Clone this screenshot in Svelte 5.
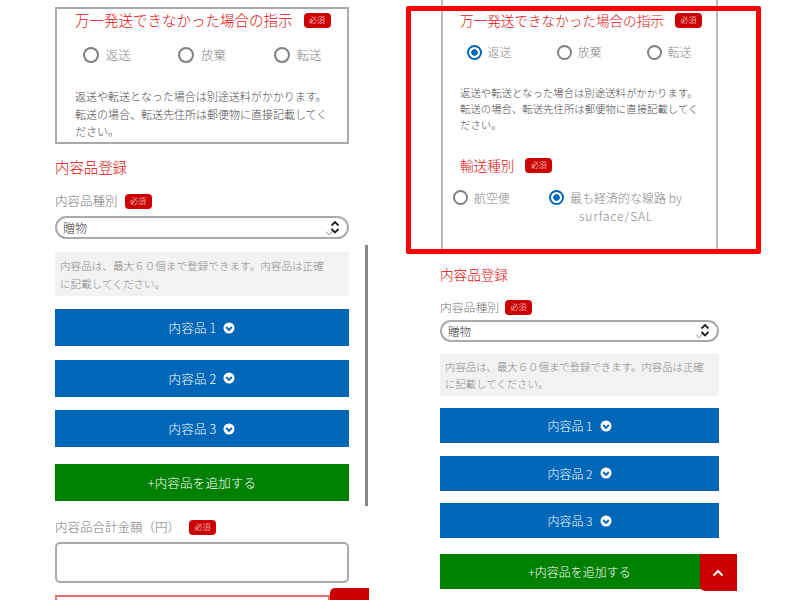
<script>
  const items = ['内容品 1', '内容品 2', '内容品 3'];
  const opts = ['返送', '放棄', '転送'];
</script>

{#snippet badge()}<span class="badge">必須</span>{/snippet}

{#snippet register()}
  <h2 class="section">内容品登録</h2>
  <div class="label">内容品種別 {@render badge()}</div>
  <div class="select">
    <span>贈物</span>
    <svg width="22" height="18" viewBox="0 0 22 18" fill="none">
      <path d="M3 12.500l3 3.500 4-4.500" stroke="#999" stroke-width="1"/>
      <path d="M8.500 6.500l3.500-3.500 3.500 3.500M8.500 10l3.500 3.500 3.500-3.500" stroke="#222" stroke-width="1.800"/>
    </svg>
  </div>
  <div class="info">内容品は、最大６０個まで登録できます。内容品は正確に記載してください。</div>
  <div class="buttons">
    {#each items as item}
      <button class="btn blue">
        {item}
        <svg width="12" height="12" viewBox="0 0 12 12">
          <circle cx="6" cy="6" r="5.500" fill="#fff"/>
          <path d="M3.200 5l2.800 2.800L8.800 5" fill="none" stroke="#0066b8" stroke-width="1.900"/>
        </svg>
      </button>
    {/each}
  </div>
  <button class="btn green">+内容品を追加する</button>
{/snippet}

<div class="page">
  <div class="col left">
    <section class="box">
      <h3 class="title">万一発送できなかった場合の指示 {@render badge()}</h3>
      <div class="radios">
        {#each opts as o}
          <div class="radio"><i class="dot"></i>{o}</div>
        {/each}
      </div>
      <p class="note">返送や転送となった場合は別途送料がかかります。転送の場合、転送先住所は郵便物に直接記載してください。</p>
    </section>
    {@render register()}
    <div class="label total">内容品合計金額（円）{@render badge()}</div>
    <div class="input"></div>
    <div class="redbox"></div>
    <div class="scrollbar"></div>
    <div class="tab"></div>
  </div>

  <div class="col right">
    <section class="box">
      <h3 class="title">万一発送できなかった場合の指示 {@render badge()}</h3>
      <div class="radios">
        {#each opts as o, i}
          <div class="radio"><i class="dot" class:on={i === 0}></i>{o}</div>
        {/each}
      </div>
      <p class="note">返送や転送となった場合は別途送料がかかります。転送の場合、転送先住所は郵便物に直接記載してください。</p>
      <h3 class="title ship">輸送種別 {@render badge()}</h3>
      <div class="ship-row">
        <div class="radio"><i class="dot"></i>航空便</div>
        <div class="radio wide"><i class="dot on"></i><span>最も経済的な線路 by<b>surface/SAL</b></span></div>
      </div>
    </section>
    {@render register()}
    <button class="totop" aria-label="ページトップへ">
      <svg width="12" height="8" viewBox="0 0 12 8"><path d="M1.500 6.500L6 2l4.500 4.500" fill="none" stroke="#fff" stroke-width="2"/></svg>
    </button>
  </div>

  <div class="frame"></div>
</div>

<style>
  :global(body) { margin: 0; background: #fff; }
  .page {
    position: relative;
    width: 800px;
    height: 600px;
    overflow: hidden;
    display: flex;
    align-items: flex-start;
    font-family: "Noto Sans CJK JP", "Noto Sans", sans-serif;
    font-weight: 300;
  }
  .col { position: relative; box-sizing: border-box; flex: none; display: flex; flex-direction: column; }
  .left { width: 294px; margin-left: 55px; padding-top: 7px; }
  .right { width: 279px; margin-left: 91px; }

  h2, h3, p { margin: 0; font-weight: 300; }

  .box { box-sizing: border-box; border: 2px solid #aaa; }
  .left .box { height: 137px; padding: 0 0 0 18px; }
  .right .box { height: 254px; width: 277px; padding: 9px 0 0 17px; border-top: 0; border-bottom: 0; border-color: #bbb; margin: 0 0 10px 1px; }

  .title { display: flex; align-items: center; color: #dc0a0a; white-space: nowrap; gap: 11px; line-height: 22px; }
  .left .title { font-size: 14.500px; }
  .right .title { font-size: 13.600px; }

  .badge {
    display: inline-flex;
    align-items: center;
    justify-content: center;
    width: 27px;
    height: 15px;
    border-radius: 4px;
    background: #cc0000;
    color: #fff;
    font-size: 8px;
    line-height: 1;
  }

  .radios { display: flex; }
  .radios .radio { flex: none; }
  .left .radios { margin: 14px 0 0 7.500px; }
  .left .radios .radio { width: 95.500px; }
  .right .radios { margin: 12px 0 0 6.500px; }
  .right .radios .radio { width: 90px; }

  .radio { display: flex; align-items: center; color: #888; white-space: nowrap; }
  .left .radio { font-size: 12.500px; gap: 7px; line-height: 20px; }
  .right .radio { font-size: 12px; gap: 6px; line-height: 18px; }

  .dot {
    flex: none;
    box-sizing: border-box;
    width: 15px;
    height: 15px;
    border: 2px solid #808080;
    border-radius: 50%;
    background: #fff;
  }
  .left .dot { width: 16px; height: 16px; }
  .dot.on { border-color: #0066b8; background: radial-gradient(circle, #0066b8 0 3px, #fff 3.500px); }

  .note { color: #4a4a4a; }
  .left .note { margin-top: 23px; font-size: 11px; line-height: 17.500px; width: 256px; }
  .right .note { margin-top: 24px; font-size: 10.400px; line-height: 16px; width: 240px; }

  .ship { margin-top: 21px; }
  .ship-row { display: flex; margin: 13px 0 0 -7px; }
  .right .ship-row .radio { align-items: flex-start; }
  .ship-row .radio:first-child { width: 96px; }
  .ship-row .dot { margin-top: 1px; }
  .wide span { display: block; }
  .wide b { display: block; font-weight: 300; margin-left: 9px; letter-spacing: .95px; }

  .section { color: #dc0a0a; line-height: 20px; }
  .left .section { font-size: 14.400px; margin-top: 13px; }
  .right .section { font-size: 13.600px; }

  .label { display: flex; align-items: center; gap: 7px; color: #777; white-space: nowrap; line-height: 18px; }
  .left .label { font-size: 12.500px; margin-top: 15px; }
  .right .label { font-size: 11.800px; margin-top: 14px; gap: 6px; }

  .select {
    box-sizing: border-box;
    display: flex;
    align-items: center;
    justify-content: space-between;
    border: 2px solid #aaa;
    border-radius: 12px;
    background: #fff;
    color: #333;
    padding: 0 2px 0 6px;
  }
  .left .select { height: 23px; margin-top: 6px; font-size: 12px; }
  .right .select { height: 22px; margin-top: 4px; font-size: 11.500px; }

  .info { background: #f2f2f2; color: #888; box-sizing: border-box; }
  .left .info { margin-top: 13px; height: 44px; padding: 5px 18px 0 5px; font-size: 10.600px; line-height: 17.500px; }
  .right .info { margin-top: 12px; height: 42px; padding: 5px 12px 0 5px; font-size: 10.400px; line-height: 16.500px; }

  .buttons { display: flex; flex-direction: column; }
  .left .buttons { gap: 13.500px; margin-top: 13px; }
  .right .buttons { gap: 12.500px; margin-top: 12px; }

  .btn {
    display: flex;
    align-items: center;
    justify-content: center;
    gap: 7px;
    border: 0;
    padding: 0;
    width: 100%;
    color: #fff;
    font-family: inherit;
    font-weight: 300;
  }
  .left .btn { height: 37px; font-size: 12.500px; letter-spacing: .2px; }
  .right .btn { height: 35px; font-size: 12px; }
  .blue { background: #0066b8; }
  .green { background: #008000; }
  .left .green { margin-top: 17px; }
  .right .green { margin-top: 16px; }

  .total { gap: 9px; }
  .left .total { margin-top: 17px; }
  .input { box-sizing: border-box; height: 41px; margin-top: 6px; border: 2px solid #aaa; border-radius: 5px; }
  .redbox { height: 30px; margin-top: 12px; width: 275px; border: 2px solid #e87070; box-sizing: border-box; background: #fff; }

  .scrollbar { position: absolute; left: 309.500px; top: 245px; width: 3px; height: 261px; background: #888; }
  .tab { position: absolute; left: 275px; top: 588px; width: 39px; height: 20px; background: #cc0000; border-top-left-radius: 5px; }
  .totop {
    position: absolute;
    left: 259.500px;
    top: 554px;
    width: 37px;
    height: 37px;
    padding: 0;
    border: 0;
    border-radius: 0 0 0 5px;
    background: #cc0000;
    display: flex;
    align-items: center;
    justify-content: center;
  }
  .frame {
    position: absolute;
    left: 406px;
    top: 6px;
    width: 355px;
    height: 248px;
    box-sizing: border-box;
    border: 5px solid #f00;
    border-radius: 2px;
    pointer-events: none;
  }
</style>
